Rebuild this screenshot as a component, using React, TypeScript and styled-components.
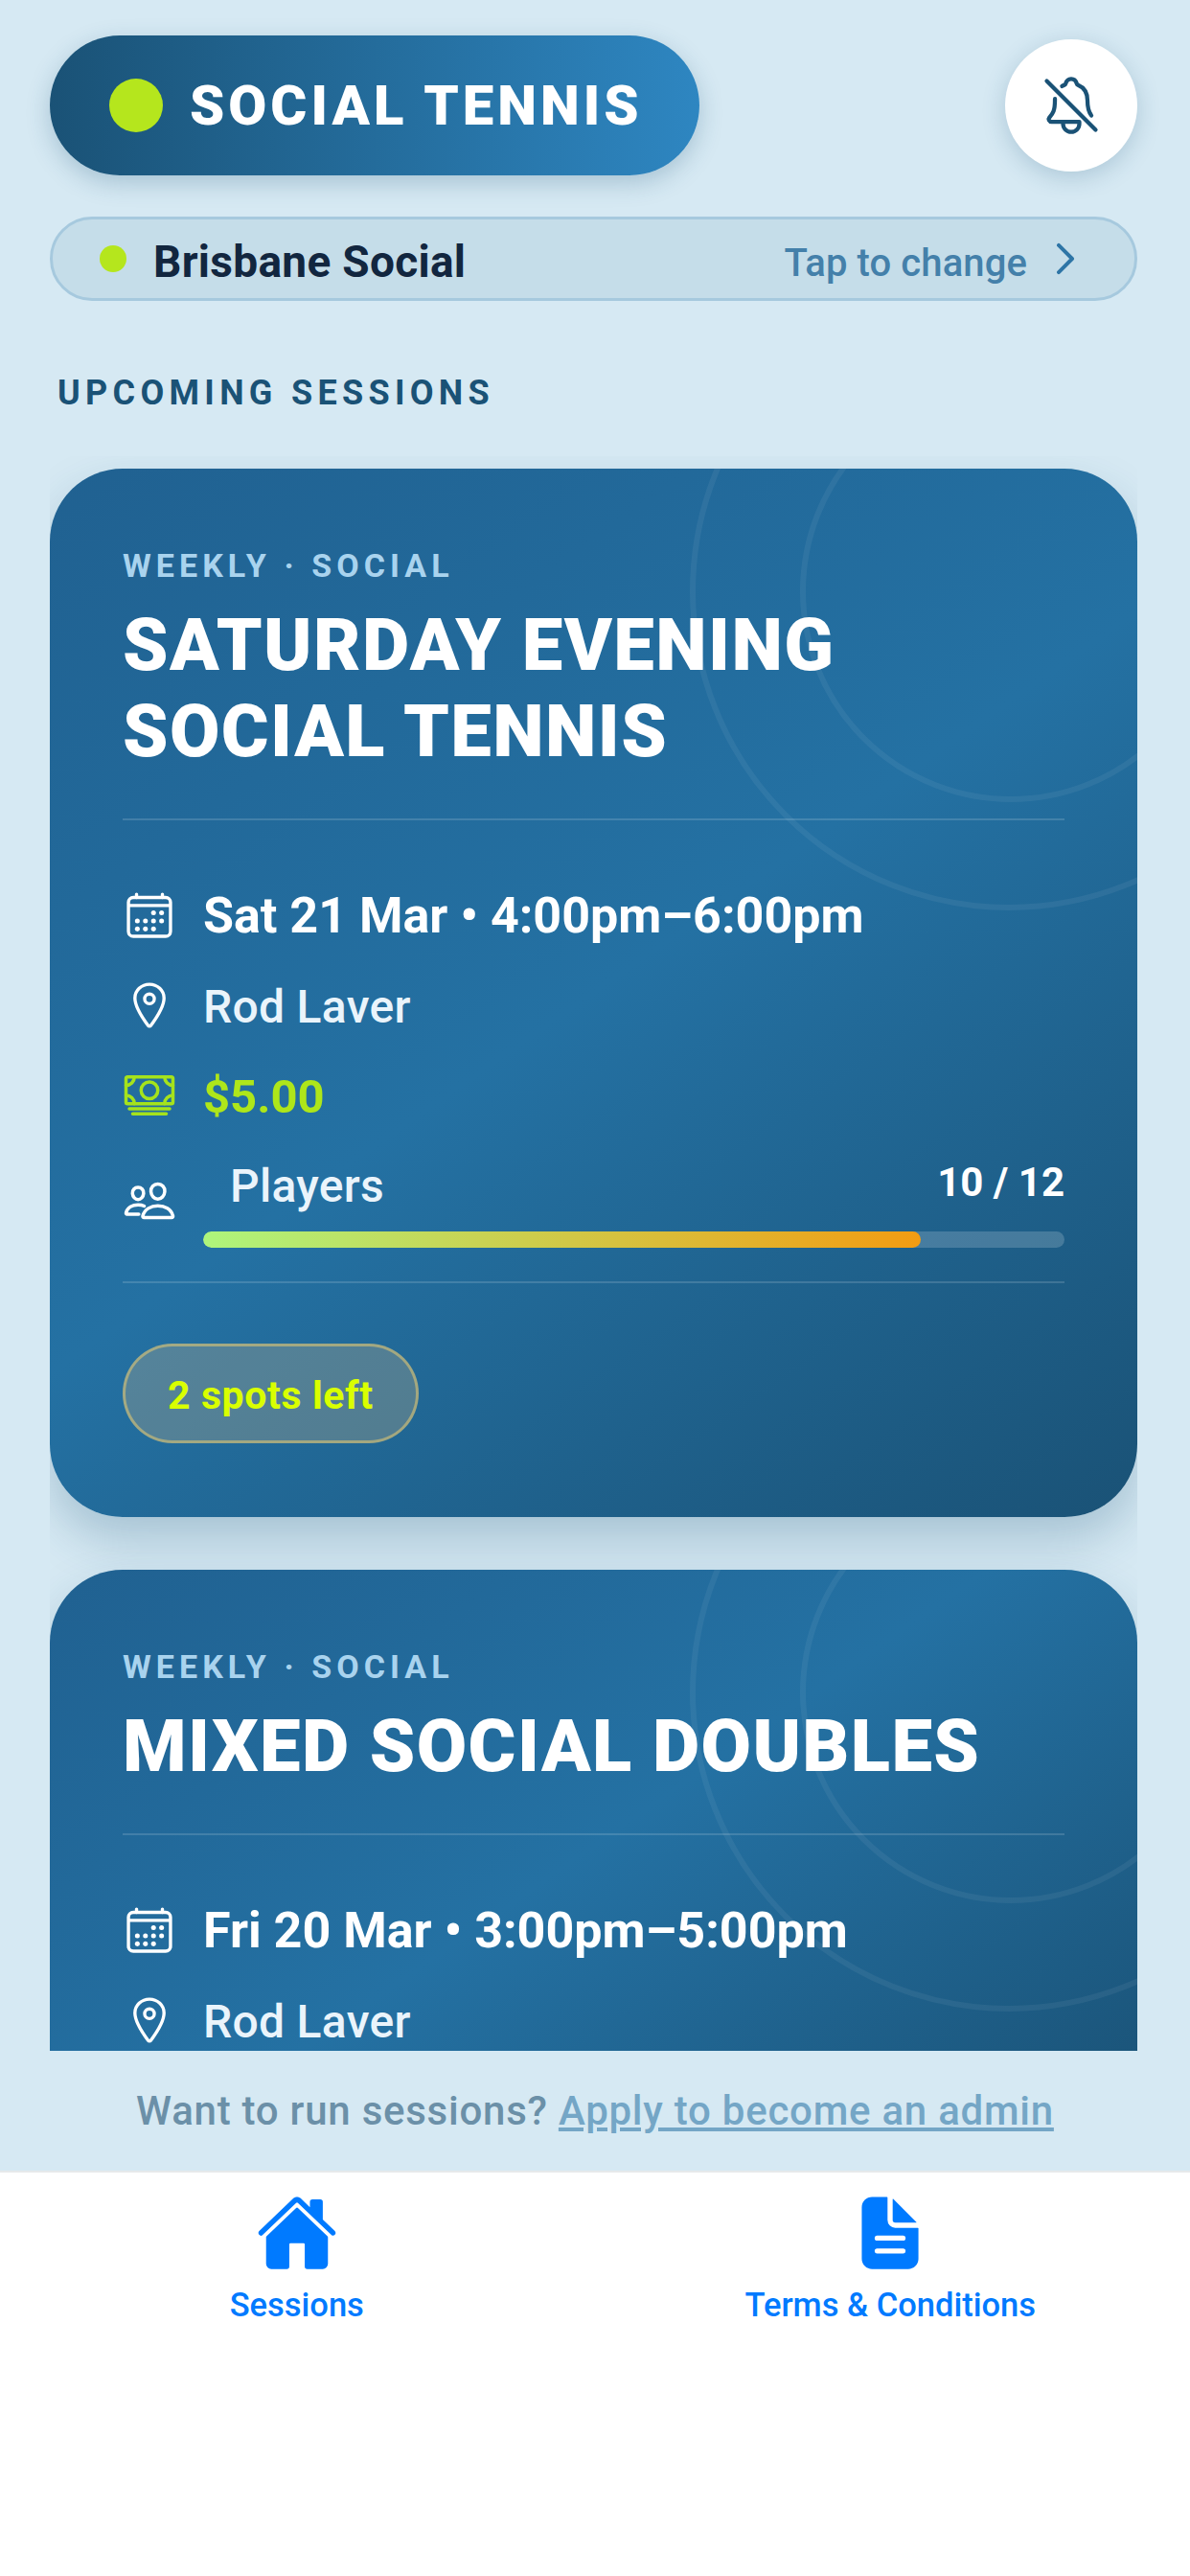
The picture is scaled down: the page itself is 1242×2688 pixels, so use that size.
import { ReactNode } from 'react'
import styled, { createGlobalStyle } from 'styled-components'
import {
  IoCalendarOutline,
  IoCashOutline,
  IoChevronForward,
  IoDocumentText,
  IoHome,
  IoLocationOutline,
  IoNotificationsOffOutline,
  IoPeopleOutline,
} from 'react-icons/io5'

const GlobalStyle = createGlobalStyle`
  html, body {
    margin: 0;
    padding: 0;
    background: #d6e9f3;
  }
  * {
    box-sizing: border-box;
  }
`

type Session = {
  title: string[]
  date: string
  venue: string
  price?: string
  filled?: number
  total?: number
}

const sessions: Session[] = [
  {
    title: ['SATURDAY EVENING', 'SOCIAL TENNIS'],
    date: 'Sat 21 Mar • 4:00pm–6:00pm',
    venue: 'Rod Laver',
    price: '$5.00',
    filled: 10,
    total: 12,
  },
  {
    title: ['MIXED SOCIAL DOUBLES'],
    date: 'Fri 20 Mar • 3:00pm–5:00pm',
    venue: 'Rod Laver',
  },
]

const InfoRow = ({ icon, children }: { icon: ReactNode; children: ReactNode }) => (
  <Row>
    <IconBox>{icon}</IconBox>
    {children}
  </Row>
)

const SessionCard = ({ session }: { session: Session }) => {
  const { title, date, venue, price, filled, total } = session
  return (
    <Card>
      <Ring $size={440} $top={-92} $right={-88} />
      <Ring $size={666} $top={-205} $right={-199} />
      <Tag>WEEKLY · SOCIAL</Tag>
      <Title>
        {title.map((line) => (
          <div key={line}>{line}</div>
        ))}
      </Title>
      <Divider $top={46} />
      <Details>
        <InfoRow icon={<IoCalendarOutline size={54} color="#fff" />}>
          <DateText>{date}</DateText>
        </InfoRow>
        <InfoRow icon={<IoLocationOutline size={54} color="#fff" />}>
          <Venue>{venue}</Venue>
        </InfoRow>
        {price && (
          <InfoRow icon={<IoCashOutline size={58} color="#a5e31c" />}>
            <Price>{price}</Price>
          </InfoRow>
        )}
        {filled !== undefined && total !== undefined && (
          <PlayersRow>
            <PlayersIcon>
              <IoPeopleOutline size={56} color="#fff" />
            </PlayersIcon>
            <PlayersBody>
              <PlayersHead>
                <PlayersLabel>Players</PlayersLabel>
                <PlayersCount>
                  {filled} / {total}
                </PlayersCount>
              </PlayersHead>
              <Track>
                <Fill style={{ width: `${(filled / total) * 100}%` }} />
              </Track>
            </PlayersBody>
          </PlayersRow>
        )}
      </Details>
      {filled !== undefined && total !== undefined && (
        <>
          <Divider $top={35} />
          <Badge>{total - filled} spots left</Badge>
        </>
      )}
    </Card>
  )
}

export default function App() {
  return (
    <Screen>
      <GlobalStyle />
      <Header>
        <Brand>
          <BrandDot />
          <BrandName>SOCIAL TENNIS</BrandName>
        </Brand>
        <BellButton>
          <IoNotificationsOffOutline size={68} color="#1a5276" />
        </BellButton>
      </Header>
      <LocationBar>
        <LocationDot />
        <LocationName>Brisbane Social</LocationName>
        <ChangeText>Tap to change</ChangeText>
        <Chevron size={50} />
      </LocationBar>
      <SectionTitle>UPCOMING SESSIONS</SectionTitle>
      <List>
        {sessions.map((session) => (
          <SessionCard key={session.date} session={session} />
        ))}
      </List>
      <Footer>
        <FooterText>
          Want to run sessions? <FooterLink>Apply to become an admin</FooterLink>
        </FooterText>
      </Footer>
      <TabBar>
        <Tab>
          <IoHome size={86} />
          <TabLabel>Sessions</TabLabel>
        </Tab>
        <Tab>
          <IoDocumentText size={86} />
          <TabLabel>Terms &amp; Conditions</TabLabel>
        </Tab>
      </TabBar>
    </Screen>
  )
}

const Screen = styled.div`
  width: 1242px;
  height: 2688px;
  display: flex;
  flex-direction: column;
  overflow: hidden;
  background: #d6e9f3;
  font-family: Roboto, 'Liberation Sans', sans-serif;
`

const Header = styled.header`
  display: flex;
  align-items: center;
  justify-content: space-between;
  padding: 37px 55px 0 52px;
`

const Brand = styled.div`
  width: 678px;
  height: 146px;
  display: flex;
  align-items: center;
  gap: 28px;
  padding-left: 62px;
  border-radius: 73px;
  background: linear-gradient(90deg, #1a5276, #2e86c1);
  box-shadow: 0 8px 24px rgba(26, 82, 118, 0.25);
`

const BrandDot = styled.span`
  width: 56px;
  height: 56px;
  border-radius: 50%;
  background: #b5e61d;
`

const BrandName = styled.span`
  color: #fff;
  font-size: 58px;
  font-weight: 900;
  letter-spacing: 4px;
`

const BellButton = styled.div`
  width: 138px;
  height: 138px;
  display: flex;
  align-items: center;
  justify-content: center;
  border-radius: 50%;
  background: #fff;
  box-shadow: 0 6px 24px rgba(26, 82, 118, 0.22);
`

const LocationBar = styled.div`
  height: 88px;
  margin: 43px 55px 0 52px;
  display: flex;
  align-items: center;
  padding: 0 47px 0 49px;
  border: 3px solid #a6c9de;
  border-radius: 44px;
  background: #c5dde9;
`

const LocationDot = styled.span`
  width: 28px;
  height: 28px;
  border-radius: 50%;
  background: #b5e61d;
`

const LocationName = styled.span`
  flex: 1;
  margin: 6px 0 0 28px;
  color: #12263f;
  font-size: 46px;
  font-weight: 700;
  letter-spacing: 0.3px;
`

const ChangeText = styled.span`
  margin-right: 15px;
  margin-top: 8px;
  color: #4480aa;
  font-size: 40px;
  font-weight: 500;
  letter-spacing: 0.1px;
`

const Chevron = styled(IoChevronForward)`
  color: #2e75a6;
  path {
    stroke-width: 40;
  }
`

const SectionTitle = styled.h2`
  margin: 0;
  padding: 75px 0 0 60px;
  color: #1a5276;
  font-size: 36px;
  line-height: 42px;
  font-weight: 700;
  letter-spacing: 5.3px;
`

const List = styled.main`
  flex: 1;
  min-height: 0;
  margin: 45px 55px 0 52px;
  padding-top: 13px;
  display: flex;
  flex-direction: column;
  gap: 55px;
  overflow: hidden;
`

const Card = styled.article`
  position: relative;
  flex-shrink: 0;
  padding: 80px 76px 77px;
  border-radius: 76px;
  overflow: hidden;
  background: linear-gradient(145deg, #206191 0%, #2471a3 50%, #1a5276 100%);
  box-shadow: 0 24px 48px rgba(26, 82, 118, 0.25);
`

const Ring = styled.span<{ $size: number; $top: number; $right: number }>`
  position: absolute;
  top: ${({ $top }) => $top}px;
  right: ${({ $right }) => $right}px;
  width: ${({ $size }) => $size}px;
  height: ${({ $size }) => $size}px;
  border: 6px solid rgba(255, 255, 255, 0.06);
  border-radius: 50%;
`

const Tag = styled.div`
  position: relative;
  color: #a9d3ee;
  font-size: 34px;
  line-height: 42px;
  font-weight: 700;
  letter-spacing: 5.05px;
`

const Title = styled.h3`
  position: relative;
  margin: 17px 0 0;
  color: #fff;
  font-size: 76px;
  line-height: 90px;
  font-weight: 900;
  letter-spacing: 1.4px;
`

const Divider = styled.hr<{ $top: number }>`
  position: relative;
  height: 2px;
  margin: ${({ $top }) => $top}px 0 0;
  border: 0;
  background: rgba(255, 255, 255, 0.15);
`

const Details = styled.div`
  position: relative;
  margin-top: 69px;
  display: flex;
  flex-direction: column;
  gap: 34px;
`

const Row = styled.div`
  height: 60px;
  display: flex;
  align-items: center;
  gap: 28px;
`

const IconBox = styled.div`
  width: 56px;
  flex-shrink: 0;
  display: flex;
  justify-content: center;
`

const PlayersIcon = styled(IconBox)`
  margin-bottom: 4px;
`

const DateText = styled.span`
  color: #fff;
  font-size: 52px;
  font-weight: 700;
`

const Venue = styled.span`
  margin-top: 3px;
  color: #eaf4fb;
  font-size: 48px;
  font-weight: 500;
  letter-spacing: 0.3px;
`

const Price = styled.span`
  margin-top: 3px;
  color: #aee61a;
  font-size: 49px;
  font-weight: 700;
`

const PlayersRow = styled.div`
  display: flex;
  align-items: center;
  gap: 28px;
`

const PlayersBody = styled.div`
  flex: 1;
`

const PlayersHead = styled.div`
  height: 60px;
  margin-bottom: 18px;
  display: flex;
  align-items: center;
  justify-content: space-between;
`

const PlayersLabel = styled.span`
  margin-left: 28px;
  color: #eaf4fb;
  font-size: 48px;
  font-weight: 500;
  letter-spacing: 0.3px;
`

const PlayersCount = styled.span`
  margin-top: -8px;
  color: #fff;
  font-size: 42px;
  font-weight: 700;
`

const Track = styled.div`
  height: 17px;
  border-radius: 9px;
  overflow: hidden;
  background: rgba(255, 255, 255, 0.18);
`

const Fill = styled.div`
  height: 100%;
  border-radius: 9px;
  background: linear-gradient(90deg, #aef57c, #f39c12);
`

const Badge = styled.div`
  position: relative;
  width: fit-content;
  height: 104px;
  margin-top: 63px;
  padding: 4px 44px 0;
  display: flex;
  align-items: center;
  border: 3px solid rgba(243, 210, 110, 0.5);
  border-radius: 52px;
  background: rgba(232, 192, 135, 0.25);
  color: #d9ff00;
  font-size: 41px;
  font-weight: 700;
  letter-spacing: 0.6px;
`

const Footer = styled.div`
  height: 125px;
  flex-shrink: 0;
  display: flex;
  align-items: center;
  justify-content: center;
`

const FooterText = styled.p`
  margin: 0;
  color: #6b90a8;
  font-size: 42px;
  font-weight: 500;
  letter-spacing: 0.75px;
`

const FooterLink = styled.span`
  color: #74a6c6;
  text-decoration: underline;
`

const TabBar = styled.nav`
  height: 423px;
  flex-shrink: 0;
  display: flex;
  padding-right: 3px;
  background: #fff;
  border-top: 2px solid #e6e9eb;
`

const Tab = styled.div`
  flex: 1;
  display: flex;
  flex-direction: column;
  align-items: center;
  padding-top: 20px;
  color: #007aff;
`

const TabLabel = styled.span`
  margin-top: 12px;
  font-size: 34.5px;
  font-weight: 500;
  color: #007aff;
`
